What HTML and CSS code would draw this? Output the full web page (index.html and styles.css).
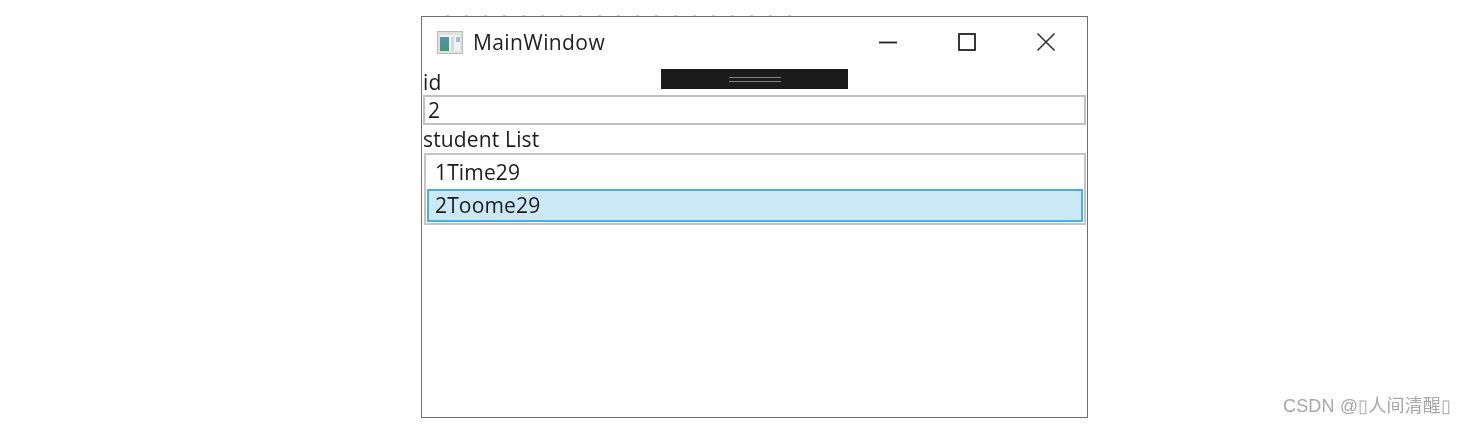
FILE: index.html
```html
<!DOCTYPE html>
<html lang="en">
<head>
    <meta charset="UTF-8">
    <meta name="viewport" content="width=device-width, initial-scale=1.0">
    <title>MainWindow</title>
    <link rel="stylesheet" href="styles.css">
</head>
<body>
<div class="window">
    <div class="cut-text"></div>
    <div class="titlebar">
        <svg class="app-icon" width="26" height="23" viewBox="0 0 26 23">
            <defs>
                <linearGradient id="pane" x1="0" y1="0" x2="0" y2="1">
                    <stop offset="0" stop-color="#5a8fb0"/>
                    <stop offset="1" stop-color="#3f9a78"/>
                </linearGradient>
            </defs>
            <rect x="0.5" y="0.5" width="25" height="22" fill="#dfe1e1" stroke="#b9bbbb"/>
            <rect x="3" y="4" width="20" height="16" fill="#f1f2f2"/>
            <rect x="3" y="6" width="9" height="14" fill="url(#pane)"/>
            <rect x="14" y="6" width="3" height="14" fill="#d5d8d8"/>
            <rect x="19" y="6" width="4" height="5" fill="#9fc2c6"/>
        </svg>
        <span class="title">MainWindow</span>
        <div class="controls">
            <svg width="20" height="20" viewBox="0 0 20 20"><path d="M1 10.5H19" stroke="#222" stroke-width="1.8"/></svg>
            <svg width="20" height="20" viewBox="0 0 20 20"><rect x="2" y="2" width="16" height="16" fill="none" stroke="#222" stroke-width="1.8"/></svg>
            <svg width="20" height="20" viewBox="0 0 20 20"><path d="M1.5 1.5L18.5 18.5M18.5 1.5L1.5 18.5" stroke="#333" stroke-width="1.6"/></svg>
        </div>
    </div>
    <div class="debug-bar"><span class="grip"></span></div>
    <div class="label label-id">id</div>
    <div class="textbox">2</div>
    <div class="label">student List</div>
    <div class="listbox">
        <div class="item">1Time29</div>
        <div class="item selected">2Toome29</div>
    </div>
</div>
<div class="watermark">CSDN @▯人间清醒▯</div>
</body>
</html>
```

FILE: styles.css
```css
html, body {
    height: 100%;
}
body {
    margin: 0;
    background-color: white;
    font-family: "Open Sans", "Noto Sans", sans-serif;
    color: #1c1c1c;
    overflow: hidden;
}
.window {
    position: relative;
    box-sizing: border-box;
    width: 667px;
    height: 402px;
    margin: 16px 0 0 421px;
    border: 1px solid #6e6e6e;
    background-color: white;
    font-size: 21px;
    letter-spacing: 0.15px;
    filter: blur(0.35px);
}
.cut-text {
    position: absolute;
    left: 24px;
    top: -2px;
    width: 360px;
    height: 1px;
    background-image: repeating-linear-gradient(90deg, #c3d6df 0 3px, transparent 3px 19px);
}
.titlebar {
    display: flex;
    align-items: center;
    height: 50px;
    padding-left: 15px;
}
.app-icon {
    margin-right: 10px;
}
.title {
    color: #222;
    letter-spacing: 0.4px;
}
.controls {
    display: flex;
    gap: 59px;
    margin-left: auto;
    margin-right: 31px;
}
.debug-bar {
    position: absolute;
    left: 239px;
    top: 52px;
    width: 187px;
    height: 20px;
    background-color: #1b1b1b;
    display: flex;
    align-items: center;
    justify-content: center;
}
.grip {
    width: 52px;
    height: 5px;
    box-sizing: border-box;
    border-top: 1px solid #808080;
    border-bottom: 1px solid #808080;
}
.label {
    line-height: 28px;
    height: 28px;
    padding-left: 1px;
}
.label-id {
    padding-top: 1px;
    height: 27px;
}
.textbox {
    box-sizing: border-box;
    height: 30px;
    margin: 0 1px;
    border: 2px solid #c0c0c4;
    padding-left: 3px;
    line-height: 26px;
}
.listbox {
    box-sizing: border-box;
    height: 72px;
    margin: 0 1px 0 2px;
    border: 2px solid #c4c4c8;
    padding: 1px 1px 0;
}
.item {
    box-sizing: border-box;
    height: 33px;
    padding-left: 8px;
    line-height: 33px;
}
.selected {
    background-color: #cbe8f6;
    border: 2px solid #45b0e5;
    padding-left: 6px;
    line-height: 29px;
}
.watermark {
    position: absolute;
    left: 1283px;
    top: 394px;
    font-family: "Liberation Sans", "Noto Sans CJK SC", sans-serif;
    font-size: 18px;
    letter-spacing: 0.15px;
    line-height: 24px;
    color: #a8a8a8;
    white-space: nowrap;
    filter: blur(0.3px);
}
```
